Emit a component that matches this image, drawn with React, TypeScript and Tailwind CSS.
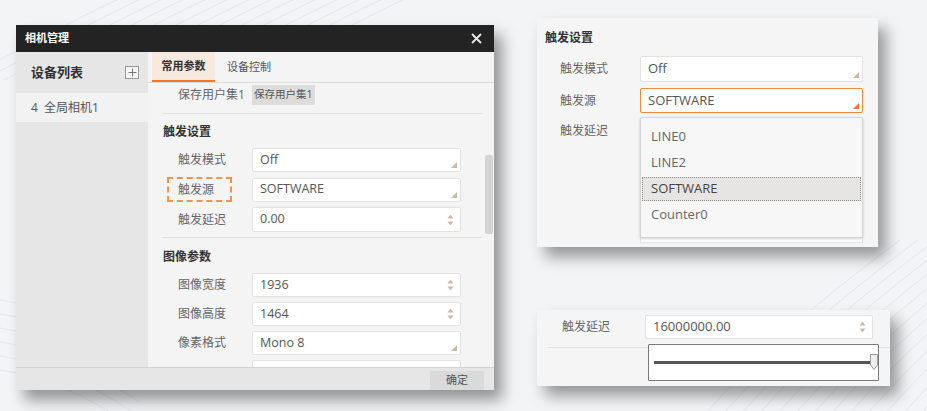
import React from 'react';

const font = "font-['Open_Sans','Noto_Sans_CJK_SC',sans-serif]";

const Corner: React.FC<{ color?: string }> = ({ color = '#cdb7a8' }) => (
  <svg className="absolute right-[3px] bottom-[3px]" width="6" height="6" viewBox="0 0 6 6">
    <path d="M6 0 L6 6 L0 6 Z" fill={color} />
  </svg>
);

const Spinner: React.FC = () => (
  <svg className="absolute right-[6px] top-1/2 -translate-y-1/2" width="7" height="12" viewBox="0 0 7 12">
    <path d="M3.5 0.5 L6.5 4.5 L0.5 4.5 Z" fill="#d2b8a6" />
    <path d="M3.5 11.5 L6.5 7.5 L0.5 7.5 Z" fill="#d2b8a6" />
  </svg>
);

type FieldProps = {
  value?: string;
  kind?: 'select' | 'spin' | 'none';
  active?: boolean;
  className?: string;
  textClass?: string;
};

const Field: React.FC<FieldProps> = ({ value = '', kind = 'select', active, className = '', textClass = 'text-[12.5px]' }) => (
  <div
    className={`relative flex items-center bg-white rounded-[2px] border ${
      active ? 'border-[#f08a3c]' : 'border-[#e2e2e2]'
    } pl-[7px] text-[#555] ${textClass} ${className}`}
  >
    {value}
    {kind === 'select' && <Corner color={active ? '#f07a2a' : '#cdb7a8'} />}
    {kind === 'spin' && <Spinner />}
  </div>
);

const Row: React.FC<{ label: string; children: React.ReactNode; className?: string; labelClass?: string }> = ({
  label,
  children,
  className = '',
  labelClass = 'w-[89px] pl-[15px]',
}) => (
  <div className={`flex items-center ${className}`}>
    <div className={`text-[12px] text-[#666] shrink-0 ${labelClass}`}>{label}</div>
    {children}
  </div>
);

const Backdrop: React.FC = () => (
  <svg className="absolute inset-0 z-0" width="927" height="411" viewBox="0 0 927 411">
    {Array.from({ length: 14 }).map((_, i) => (
      <path
        key={`a${i}`}
        d={`M${-40 + i * 22} 80 C ${40 + i * 22} 40, ${90 + i * 22} 10, ${140 + i * 22} -10`}
        stroke="#e4e6ea"
        strokeWidth="1"
        fill="none"
      />
    ))}
    {Array.from({ length: 16 }).map((_, i) => (
      <path
        key={`b${i}`}
        d={`M${700 + i * 18} 420 C ${760 + i * 18} 350, ${820 + i * 18} 300, ${900 + i * 18} 240`}
        stroke="#e4e6ea"
        strokeWidth="1"
        fill="none"
      />
    ))}
    {Array.from({ length: 6 }).map((_, i) => (
      <path
        key={`c${i}`}
        d={`M0 ${300 + i * 14} C 60 ${310 + i * 14}, 90 ${330 + i * 14}, 140 ${360 + i * 14}`}
        stroke="#e6e8ec"
        strokeWidth="1"
        fill="none"
      />
    ))}
  </svg>
);

const MainDialog: React.FC = () => (
  <div className="w-[478px] h-[365px] mt-[25px] flex flex-col bg-[#f4f4f5] shadow-[8px_10px_14px_rgba(0,0,0,0.4)] shrink-0">
    {/* title */}
    <div className="h-[27px] bg-[#232323] flex items-center justify-between pl-[9px] pr-[12px] shrink-0">
      <span className="text-white text-[11px] font-bold">相机管理</span>
      <svg width="11" height="11" viewBox="0 0 11 11">
        <path d="M1 1 L10 10 M10 1 L1 10" stroke="#e8e8e8" strokeWidth="1.8" />
      </svg>
    </div>

    <div className="flex-1 flex min-h-0">
      {/* device list */}
      <div className="w-[132px] bg-[#e6e6e6] flex flex-col shrink-0">
        <div className="h-[41px] flex items-center justify-between pl-[15px] pr-[9px]">
          <span className="text-[13px] font-bold text-[#333]">设备列表</span>
          <div className="w-[14px] h-[13px] border border-[#9a9a9a] bg-[#f4f4f4] flex items-center justify-center">
            <svg width="9" height="9" viewBox="0 0 9 9">
              <path d="M4.5 0.5 V8.5 M0.5 4.5 H8.5" stroke="#777" strokeWidth="1" />
            </svg>
          </div>
        </div>
        <div className="h-[29px] bg-[#f2f2f3] flex items-center pl-[15px] text-[12px] text-[#555]">
          4&nbsp;&nbsp;全局相机1
        </div>
      </div>

      {/* params */}
      <div className="flex-1 flex flex-col min-w-0">
        <div className="h-[31px] border-b border-[#dcdcdc] flex items-stretch pl-[4px] shrink-0">
          <div className="w-[63px] bg-[#f8e9df] border-b-2 border-[#f07a2a] flex items-center justify-center text-[11px] font-bold text-[#333]">
            常用参数
          </div>
          <div className="ml-[12px] flex items-center text-[11px] text-[#555]">设备控制</div>
        </div>

        <div className="flex-1 flex min-h-0">
          <div className="flex-1 overflow-hidden pl-[15px] pr-[3px]">
            <div className="flex items-center mt-[2px] h-[20px]">
              <div className="w-[89px] pl-[15px] text-[12px] text-[#666]">保存用户集1</div>
              <div className="h-[20px] px-[2px] bg-[#dcdcdc] text-[10.5px] text-[#555] flex items-center">保存用户集1</div>
            </div>
            <div className="mt-[8px] border-t border-[#e0e0e0]" />
            <div className="mt-[8px] h-[20px] flex items-center text-[12px] font-bold text-[#333]">触发设置</div>
            <Row label="触发模式" className="mt-[6px]">
              <Field value="Off" className="w-[209px] h-[24px]" />
            </Row>
            <div className="flex items-center mt-[5px]">
              <div className="w-[89px] shrink-0 flex items-center">
                <div className="ml-[4px] w-[65px] h-[25px] border-2 border-dashed border-[#f5914a] flex items-center pl-[9px] text-[12px] text-[#666]">
                  触发源
                </div>
              </div>
              <Field value="SOFTWARE" className="w-[209px] h-[24px]" />
            </div>
            <Row label="触发延迟" className="mt-[5px]">
              <Field value="0.00" kind="spin" className="w-[209px] h-[25px]" />
            </Row>
            <div className="mt-[5px] border-t border-[#e0e0e0]" />
            <div className="mt-[9px] h-[20px] flex items-center text-[12px] font-bold text-[#333]">图像参数</div>
            <Row label="图像宽度" className="mt-[6px]">
              <Field value="1936" kind="spin" className="w-[209px] h-[24px]" />
            </Row>
            <Row label="图像高度" className="mt-[5px]">
              <Field value="1464" kind="spin" className="w-[209px] h-[24px]" />
            </Row>
            <Row label="像素格式" className="mt-[5px]">
              <Field value="Mono 8" className="w-[209px] h-[24px]" />
            </Row>
            <Row label="" className="mt-[5px]">
              <Field value="" kind="spin" className="w-[209px] h-[24px]" />
            </Row>
          </div>
          <div className="w-[9px] pr-[1px] shrink-0">
            <div className="mt-[72px] w-[8px] h-[79px] rounded-[2px] bg-[#d4d4d4]" />
          </div>
        </div>
      </div>
    </div>

    {/* footer */}
    <div className="h-[23px] bg-[#e6e6e6] border-t border-[#d2d2d2] flex justify-end items-end pr-[10px] shrink-0">
      <div className="w-[54px] h-[19px] bg-[#dadada] rounded-t-[1px] flex items-center justify-center text-[11px] text-[#555]">
        确定
      </div>
    </div>
  </div>
);

const SourcePanel: React.FC = () => (
  <div className="relative w-[341px] h-[229px] bg-[#f5f5f6] shadow-[8px_10px_14px_rgba(0,0,0,0.38)] overflow-hidden pl-[8px]">
    <div className="mt-[10px] h-[20px] flex items-center text-[12px] font-bold text-[#333]">触发设置</div>
    <Row label="触发模式" className="mt-[8px]" labelClass="w-[95px] pl-[15px]">
      <Field value="Off" className="w-[223px] h-[26px]" textClass="text-[13px]" />
    </Row>
    <Row label="触发源" className="mt-[6px]" labelClass="w-[95px] pl-[15px]">
      <Field value="SOFTWARE" active className="w-[223px] h-[25px]" textClass="text-[13px]" />
    </Row>
    <Row label="触发延迟" className="mt-[5px]" labelClass="w-[95px] pl-[15px]">
      <Field value="" kind="spin" className="w-[223px] h-[25px]" textClass="text-[13px]" />
    </Row>
    <div className="ml-[95px] mt-[75px] w-[223px] h-[25px] bg-white border border-[#e2e2e2]" />

    {/* dropdown list */}
    <div className="absolute left-[103px] top-[99px] w-[223px] h-[121px] bg-[#f7f7f7] border border-[#d4d4d4] rounded-[2px] shadow-[0_1px_3px_rgba(0,0,0,0.18)] pt-[6px] text-[13px] text-[#666]">
      <div className="h-[26px] flex items-center pl-[10px]">LINE0</div>
      <div className="h-[26px] flex items-center pl-[10px]">LINE2</div>
      <div className="h-[26px] flex items-center">
        <div className="mx-[1px] w-full h-[24px] bg-[#e7e5e3] border border-dotted border-[#8a8a8a] flex items-center pl-[8px] text-[#444]">
          SOFTWARE
        </div>
      </div>
      <div className="h-[26px] flex items-center pl-[10px]">Counter0</div>
    </div>
  </div>
);

const DelayPanel: React.FC = () => (
  <div className="relative w-[353px] h-[76px] bg-[#f5f5f6] shadow-[8px_10px_14px_rgba(0,0,0,0.38)] mt-[63px]">
    <Row label="触发延迟" className="pt-[5px]" labelClass="w-[108px] pl-[25px]">
      <Field value="16000000.00" kind="spin" className="w-[228px] h-[24px]" textClass="text-[13px]" />
    </Row>
    <div className="ml-[11px] mt-[8px] border-t border-[#e2e2e2]" />

    {/* slider popup */}
    <div className="absolute left-[111px] top-[34px] w-[231px] h-[37px] bg-white border border-[#7a7a7a] rounded-[1px]">
      <div className="ml-[5px] mt-[16px] w-[216px] h-[3px] bg-[#555]" />
      <svg className="absolute left-[221px] top-[9px]" width="8" height="16" viewBox="0 0 8 16">
        <path d="M0.5 0.5 H7.5 V11 L4 15.5 L0.5 11 Z" fill="#eeeeee" stroke="#9a9a9a" />
      </svg>
    </div>
  </div>
);

export default function App() {
  return (
    <div className={`relative w-[927px] h-[411px] overflow-hidden bg-[#f3f4f6] ${font}`}>
      <Backdrop />
      <div className="relative z-10 flex items-start pl-[16px]">
        <MainDialog />
        <div className="ml-[43px] mt-[18px] flex flex-col">
          <SourcePanel />
          <DelayPanel />
        </div>
      </div>
    </div>
  );
}
